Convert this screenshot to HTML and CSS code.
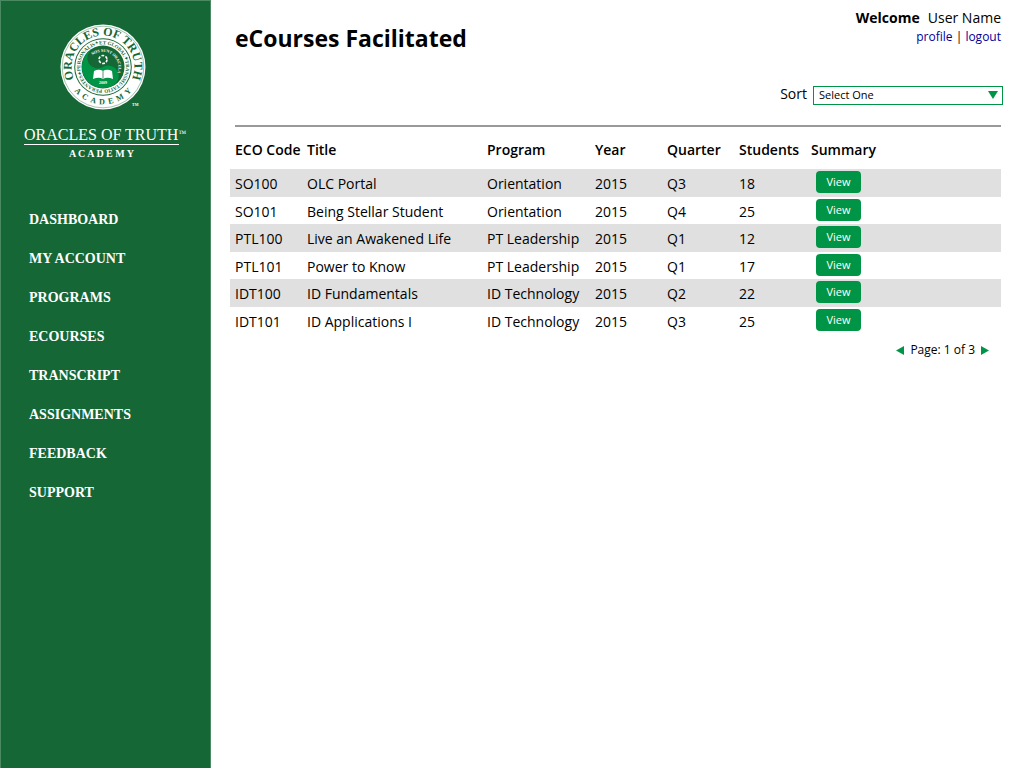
FILE: index.html
```html
<!DOCTYPE html>
<html lang="en">
<head>
<meta charset="utf-8">
<title>eCourses Facilitated</title>
<link rel="stylesheet" href="styles.css">
</head>
<body>
<div class="app">
  <aside class="sidebar">
    <div class="brand">
      <svg class="seal" viewBox="0 0 90 90" role="img" aria-label="Oracles of Truth Academy seal">
        <defs>
          <path id="arc-top" d="M23 67.5 A31.4 31.4 0 1 1 67 67.5"/>
          <path id="arc-bottom" d="M10 58 A37.3 37.3 0 0 0 80 58"/>
          <path id="arc-motto" d="M45 67.8 A22.8 22.8 0 1 1 45.1 67.8"/>
          <path id="arc-inner" d="M32.1 35.9 A15.8 15.8 0 0 1 57.9 54.1"/>
        </defs>
        <circle cx="45" cy="45" r="42.5" fill="#fff"/>
        <circle cx="45" cy="45" r="40.8" fill="none" stroke="#156735" stroke-width=".4"/>
        <circle cx="45" cy="45" r="28.8" fill="#156735"/>
        <circle cx="45" cy="45" r="27.8" fill="#fff"/>
        <circle cx="45" cy="45" r="21.5" fill="#156735"/>
        <g transform="rotate(-30 45 45)">
          <path d="M45 24 A21 21 0 0 0 45 66 A10.5 10.5 0 0 0 45 45 A10.5 10.5 0 0 1 45 24Z" fill="#009546"/>
        </g>
        <circle cx="45" cy="37.5" r="4" fill="none" stroke="#fff" stroke-width="1.6" stroke-dasharray="2.8 1.4"/>
        <path d="M36 49 Q41 46.5 45 49 Q49 46.5 54 49 L55 57 Q49 54.5 45 57 Q41 54.5 35 57Z" fill="#fff"/>
        <path d="M45 49V56.5" stroke="#156735" stroke-width=".7"/>
        <g class="seal-text">
          <text font-size="12"><textPath href="#arc-top" startOffset="50%" text-anchor="middle">ORACLES OF TRUTH</textPath></text>
          <text font-size="8"><textPath href="#arc-bottom" startOffset="50%" text-anchor="middle">A &#160;C &#160;A &#160;D &#160;E &#160;M &#160;Y</textPath></text>
          <text font-size="5"><textPath href="#arc-motto" startOffset="50%" text-anchor="middle">OPERANTES✦PERSONALIS✦ET GLOBAL✦TRANSMUTATIO✦</textPath></text>
        </g>
        <text class="seal-light" font-size="4"><textPath href="#arc-inner" startOffset="50%" text-anchor="middle">NOS SUNT ORACULA</textPath></text>
        <text class="seal-light" x="45" y="62" font-size="4" text-anchor="middle">2009</text>
        <text class="seal-light" x="74" y="84" font-size="4">TM</text>
      </svg>
      <div class="wordmark">ORACLES OF TRUTH<span class="tm">™</span></div>
      <div class="academy">A C A D E M Y</div>
    </div>
    <nav class="nav">
      <a href="#">DASHBOARD</a>
      <a href="#">MY ACCOUNT</a>
      <a href="#">PROGRAMS</a>
      <a href="#">ECOURSES</a>
      <a href="#">TRANSCRIPT</a>
      <a href="#">ASSIGNMENTS</a>
      <a href="#">FEEDBACK</a>
      <a href="#">SUPPORT</a>
    </nav>
  </aside>
  <main class="main">
    <header class="top">
      <h1>eCourses Facilitated</h1>
      <div class="user">
        <div class="welcome"><strong>Welcome</strong><span>User Name</span></div>
        <div class="links"><a href="#">profile</a> | <a href="#">logout</a></div>
      </div>
    </header>
    <div class="sort">
      <label for="sort">Sort</label>
      <div class="select-box">
        <select id="sort"><option>Select One</option></select>
        <svg class="caret" viewBox="0 0 10 8" aria-hidden="true"><path d="M0 0H10L5 8Z" fill="#009546"/></svg>
      </div>
    </div>
    <table class="courses">
      <colgroup><col class="c-code"><col class="c-title"><col class="c-program"><col class="c-year"><col class="c-quarter"><col class="c-students"><col></colgroup>
      <thead><tr><th>ECO Code</th><th>Title</th><th>Program</th><th>Year</th><th>Quarter</th><th>Students</th><th>Summary</th></tr></thead>
      <tbody>
        <tr><td>SO100</td><td>OLC Portal</td><td>Orientation</td><td>2015</td><td>Q3</td><td>18</td><td><button type="button">View</button></td></tr>
        <tr><td>SO101</td><td>Being Stellar Student</td><td>Orientation</td><td>2015</td><td>Q4</td><td>25</td><td><button type="button">View</button></td></tr>
        <tr><td>PTL100</td><td>Live an Awakened Life</td><td>PT Leadership</td><td>2015</td><td>Q1</td><td>12</td><td><button type="button">View</button></td></tr>
        <tr><td>PTL101</td><td>Power to Know</td><td>PT Leadership</td><td>2015</td><td>Q1</td><td>17</td><td><button type="button">View</button></td></tr>
        <tr><td>IDT100</td><td>ID Fundamentals</td><td>ID Technology</td><td>2015</td><td>Q2</td><td>22</td><td><button type="button">View</button></td></tr>
        <tr><td>IDT101</td><td>ID Applications I</td><td>ID Technology</td><td>2015</td><td>Q3</td><td>25</td><td><button type="button">View</button></td></tr>
      </tbody>
    </table>
    <div class="pager">
      <button type="button" aria-label="Previous page"><svg viewBox="0 0 8 9"><path d="M8 0V9L0 4.5Z" fill="#009546"/></svg></button>
      <span>Page: 1 of 3</span>
      <button type="button" aria-label="Next page"><svg viewBox="0 0 8 9"><path d="M0 0V9L8 4.5Z" fill="#009546"/></svg></button>
    </div>
  </main>
</div>
</body>
</html>
```
FILE: styles.css
```css
* { box-sizing: border-box; }

body {
  margin: 0;
  background: #fff;
  color: #000;
  font: 14px/20px "Open Sans", "Noto Sans", sans-serif;
}

.app {
  display: grid;
  grid-template-columns: 211px 1fr;
  min-height: 100vh;
}

.sidebar {
  background: #156735;
  border: solid #4b8963;
  border-width: 1px 1px 0;
  color: #fff;
  font-family: "Liberation Serif", serif;
}

.brand { padding: 21px 24px 0 23px; }

.seal {
  display: block;
  width: 90px;
  height: 90px;
  margin-left: 34px;
}

.seal-text { fill: #156735; font-weight: bold; }
.seal-light { fill: #fff; font-weight: bold; }

.wordmark {
  width: 155px;
  margin-top: 14px;
  border-bottom: 1px solid #fff;
  font-size: 16px;
  line-height: 18px;
  white-space: nowrap;
}

.tm { font-size: 8px; line-height: 8px; vertical-align: 4px; }

.academy {
  width: 155px;
  margin-top: 2px;
  font-size: 10px;
  font-weight: bold;
  line-height: 14px;
  text-align: center;
}

.nav {
  display: flex;
  flex-direction: column;
  gap: 19px;
  padding: 49px 28px;
}

.nav a {
  color: #fff;
  font-size: 14px;
  font-weight: bold;
  line-height: 20px;
  text-decoration: none;
}

.main { padding: 8px 23px 24px 19px; }

.top {
  display: flex;
  justify-content: space-between;
  padding-left: 5px;
}

h1 {
  margin: 14px 0 0;
  font-size: 23px;
  line-height: 32px;
}

.user { text-align: right; }
.welcome { display: flex; gap: 8px; }
.links { font-size: 12px; line-height: 18px; }
.links a { color: #00009c; text-decoration: none; }

.sort {
  display: flex;
  justify-content: flex-end;
  gap: 6px;
  margin: 30px 0 0 5px;
  padding-bottom: 20px;
  border-bottom: 2px solid #999;
}

.select-box { position: relative; width: 190px; margin: 2px -2px 0 0; }

select {
  display: block;
  width: 100%;
  height: 19px;
  padding: 0 5px 1px;
  appearance: none;
  background: #fff;
  border: 1px solid #009546;
  border-radius: 0;
  color: #000;
  font: 11px/16px "Open Sans", "Noto Sans", sans-serif;
}

.caret {
  position: absolute;
  top: 5px;
  right: 5px;
  width: 10px;
  height: 8px;
  pointer-events: none;
}

.courses {
  width: 100%;
  border-collapse: collapse;
  table-layout: fixed;
}

.c-code, .c-year, .c-quarter, .c-students { width: 72px; }
.c-program { width: 108px; }
.c-title { width: 180px; }

th, td { padding: 0 0 0 5px; text-align: left; white-space: nowrap; }
th { height: 42px; padding-top: 4px; font-weight: 600; }
td { height: 28px; padding-top: 2px; }
tbody tr:nth-child(even) td { height: 27px; }
tbody tr:nth-child(odd) { background: #e0e0e0; }

.courses td:last-child { padding: 0 0 2px 10px; }

.courses button {
  display: block;
  width: 45px;
  height: 22px;
  padding: 0;
  background: #009546;
  border: 0;
  border-radius: 4px;
  color: #fff;
  font: 11px/22px "Open Sans", "Noto Sans", sans-serif;
}

.pager {
  display: flex;
  justify-content: flex-end;
  align-items: center;
  gap: 6px;
  padding: 6px 12px;
  font-size: 12px;
}

.pager button {
  display: block;
  padding: 0;
  background: none;
  border: 0;
}

.pager svg { display: block; width: 8px; height: 9px; }
```
